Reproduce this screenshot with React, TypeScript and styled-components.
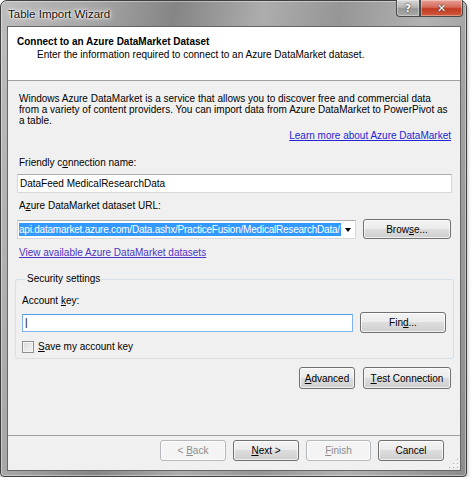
import styled, { createGlobalStyle } from 'styled-components';

const GlobalStyle = createGlobalStyle`
  html, body {
    margin: 0;
    padding: 0;
    background: #ffffff;
  }
  body {
    font-family: "Liberation Sans", Arial, sans-serif;
    font-size: 10px;
    color: #000;
  }
`;

const Window = styled.div`
  width: 467px;
  height: 477px;
  box-sizing: border-box;
  display: flex;
  flex-direction: column;
  border: 1px solid #3f3f3f;
  border-radius: 7px 7px 4px 4px;
  background: linear-gradient(
    100deg,
    #bdbdbd 0%,
    #a4a4a4 18%,
    #858585 32%,
    #adadad 48%,
    #969696 62%,
    #b2b2b2 78%,
    #8c8c8c 100%
  );
  box-shadow: inset 0 0 0 1px rgba(255, 255, 255, 0.4), 0 2px 4px rgba(0, 0, 0, 0.35);
`;

const TitleBar = styled.div`
  height: 25px;
  display: flex;
  align-items: flex-start;
  padding-left: 7px;
`;

const Title = styled.div`
  font-size: 11.5px;
  line-height: 12px;
  margin-top: 7px;
  color: #111;
  text-shadow: 0 0 6px #fff, 0 0 3px #fff, 0 0 2px #fff;
  flex: 1;
`;

const CaptionButton = styled.div<{ $close?: boolean; $w: number }>`
  width: ${(p) => p.$w}px;
  height: 17px;
  box-sizing: border-box;
  margin-top: -1px;
  border: 1px solid #4a4a4a;
  border-top: none;
  border-radius: ${(p) => (p.$close ? '0 0 4px 0' : '0 0 0 4px')};
  display: flex;
  align-items: center;
  justify-content: center;
  font-family: "DejaVu Sans", sans-serif;
  font-weight: bold;
  font-size: 11px;
  color: #fff;
  text-shadow: 0 0 1px #333, 0 0 2px #444;
  background: ${(p) =>
    p.$close
      ? 'linear-gradient(180deg, #e8a195 0%, #d46a57 45%, #c23b22 55%, #d05a3c 100%)'
      : 'linear-gradient(180deg, #d8d8d8 0%, #b5b5b5 45%, #979797 55%, #a9a9a9 100%)'};
  box-shadow: inset 0 0 0 1px rgba(255, 255, 255, 0.35);
`;

const CaptionGroup = styled.div`
  display: flex;
  margin-right: 3px;
`;

const Client = styled.div`
  flex: 1;
  margin: 0 5px 5px 6px;
  border: 1px solid #666666;
  background: #f0f0f0;
  display: flex;
  flex-direction: column;
`;

const Header = styled.div`
  height: 54px;
  box-sizing: border-box;
  background: #ffffff;
  border-bottom: 1px solid #a0a0a0;
  padding: 8px 0 0 9px;
  line-height: 13px;
`;

const HeaderTitle = styled.div`
  font-weight: bold;
  font-size: 10px;
`;

const HeaderSub = styled.div`
  padding-left: 20px;
  font-size: 10px;
`;

const Body = styled.div`
  flex: 1;
  display: flex;
  flex-direction: column;
  padding: 12px 8px 0 9px;
`;

const Paragraph = styled.div`
  line-height: 11px;
  margin-left: 2px;
  width: 432px;
`;

const Link = styled.a<{ $visited?: boolean }>`
  color: ${(p) => (p.$visited ? '#4f33c9' : '#2424d8')};
  text-decoration: underline;
  line-height: 12px;
  cursor: pointer;
`;

const RightLink = styled(Link)`
  align-self: flex-end;
  margin: 4px 1px 0 0;
`;

const LeftLink = styled(Link)`
  align-self: flex-start;
  margin: 8px 0 0 2px;
`;

const Label = styled.div<{ $mt: number }>`
  line-height: 12px;
  margin: ${(p) => p.$mt}px 0 0 2px;
`;

const TextBox = styled.div<{ $focused?: boolean; $h: number }>`
  height: ${(p) => p.$h}px;
  box-sizing: border-box;
  background: #fff;
  border: 1px solid ${(p) => (p.$focused ? '#7eb4ea' : '#d5d8de')};
  border-top-color: ${(p) => (p.$focused ? '#569de5' : '#abadb3')};
  display: flex;
  align-items: center;
  padding-left: 2px;
  line-height: 12px;
`;

const NameBox = styled(TextBox)`
  margin-top: 5px;
`;

const Row = styled.div<{ $mt: number }>`
  display: flex;
  align-items: center;
  gap: 7px;
  margin-top: ${(p) => p.$mt}px;
`;

const Combo = styled(TextBox)`
  flex: 1;
  padding-left: 1px;
`;

const ComboText = styled.div`
  width: 322px;
  height: 13px;
  white-space: nowrap;
  background: #3399ff;
  color: #fff;
  line-height: 13px;
  letter-spacing: -0.22px;
`;

const ComboArrow = styled.div`
  flex: 1;
  display: flex;
  justify-content: center;
  padding-top: 1px;
  &::after {
    content: '';
    border-left: 3.5px solid transparent;
    border-right: 3.5px solid transparent;
    border-top: 4px solid #000;
  }
`;

const Button = styled.div<{ $w: number; $h: number; $disabled?: boolean }>`
  width: ${(p) => p.$w}px;
  height: ${(p) => p.$h}px;
  box-sizing: border-box;
  border: 1px solid ${(p) => (p.$disabled ? '#b5b8ba' : '#707070')};
  border-radius: 3px;
  display: flex;
  align-items: center;
  justify-content: center;
  color: ${(p) => (p.$disabled ? '#8d8d8d' : '#000')};
  background: ${(p) =>
    p.$disabled
      ? '#f4f4f4'
      : 'linear-gradient(180deg, #f3f3f3 0%, #ebebeb 49%, #dddddd 50%, #cfcfcf 100%)'};
  box-shadow: inset 0 0 0 1px rgba(255, 255, 255, 0.7);
  flex-shrink: 0;
`;

const GroupBox = styled.fieldset`
  margin: 14px -2px 0 -2px;
  padding: 0 7px 5px 6px;
  border: 1px solid #d5dfe5;
  border-radius: 3px;
  display: flex;
  flex-direction: column;
  min-width: 0;
`;

const Legend = styled.legend`
  padding: 0 1px;
  margin-left: 4px;
  line-height: 12px;
`;

const CheckRow = styled.div`
  display: flex;
  align-items: center;
  gap: 4px;
  margin-top: 8px;
  line-height: 12px;
`;

const CheckBox = styled.div`
  width: 12px;
  height: 12px;
  box-sizing: border-box;
  border: 1px solid #8e8f8f;
  background: linear-gradient(135deg, #dcdcdc 0%, #f4f4f4 100%);
  box-shadow: inset 0 0 0 1px #f6f6f6;
`;

const ActionRow = styled.div`
  display: flex;
  justify-content: flex-end;
  gap: 8px;
  margin: 8px 1px 0 0;
`;

const Footer = styled.div`
  position: relative;
  height: 35px;
  box-sizing: border-box;
  border-top: 1px solid #a0a0a0;
  display: flex;
  justify-content: flex-end;
  gap: 7px;
  padding: 4px 16px 0 0;
`;

const Grip = styled.svg`
  position: absolute;
  right: 1px;
  bottom: 1px;
`;

function ResizeGrip() {
  const dots = [
    [9, 1],
    [9, 5],
    [5, 5],
    [9, 9],
    [5, 9],
    [1, 9],
  ];
  return (
    <Grip width="11" height="11" viewBox="0 0 11 11">
      {dots.map(([x, y]) => (
        <g key={`${x}-${y}`}>
          <rect x={x + 1} y={y + 1} width="1" height="1" fill="#fff" />
          <rect x={x} y={y} width="1" height="1" fill="#a8a8a8" />
        </g>
      ))}
    </Grip>
  );
}

export default function App() {
  return (
    <>
      <GlobalStyle />
      <Window>
        <TitleBar>
          <Title>Table Import Wizard</Title>
          <CaptionGroup>
            <CaptionButton $w={24}>?</CaptionButton>
            <CaptionButton $w={43} $close>
              ✕
            </CaptionButton>
          </CaptionGroup>
        </TitleBar>
        <Client>
          <Header>
            <HeaderTitle>Connect to an Azure DataMarket Dataset</HeaderTitle>
            <HeaderSub>
              Enter the information required to connect to an Azure DataMarket dataset.
            </HeaderSub>
          </Header>
          <Body>
            <Paragraph>
              Windows Azure DataMarket is a service that allows you to discover free and
              commercial data from a variety of content providers. You can import data from
              Azure DataMarket to PowerPivot as a table.
            </Paragraph>
            <RightLink>Learn more about Azure DataMarket</RightLink>
            <Label $mt={15}>
              Friendly c<u>o</u>nnection name:
            </Label>
            <NameBox $h={19}>DataFeed MedicalResearchData</NameBox>
            <Label $mt={7}>
              A<u>z</u>ure DataMarket dataset URL:
            </Label>
            <Row $mt={7} style={{ marginRight: 1 }}>
              <Combo $h={19}>
                <ComboText>
                  api.datamarket.azure.com/Data.ashx/PracticeFusion/MedicalResearchData/
                </ComboText>
                <ComboArrow />
              </Combo>
              <Button $w={88} $h={20}>
                Brow<u>s</u>e...
              </Button>
            </Row>
            <LeftLink $visited>View available Azure DataMarket datasets</LeftLink>
            <GroupBox>
              <Legend>Security settings</Legend>
              <Label $mt={10} style={{ marginLeft: 0 }}>
                Account <u>k</u>ey:
              </Label>
              <Row $mt={5}>
                <TextBox $h={18} $focused style={{ flex: 1 }}>
                  |
                </TextBox>
                <Button $w={86} $h={21}>
                  Fin<u>d</u>...
                </Button>
              </Row>
              <CheckRow>
                <CheckBox />
                <span>
                  <u>S</u>ave my account key
                </span>
              </CheckRow>
            </GroupBox>
            <ActionRow>
              <Button $w={56} $h={22}>
                <u>A</u>dvanced
              </Button>
              <Button $w={88} $h={22}>
                <u>T</u>est Connection
              </Button>
            </ActionRow>
          </Body>
          <Footer>
            <Button $w={66} $h={21} $disabled>
              &lt;&nbsp;<u>B</u>ack
            </Button>
            <Button $w={66} $h={21}>
              <u>N</u>ext &gt;
            </Button>
            <Button $w={65} $h={21} $disabled>
              <u>F</u>inish
            </Button>
            <Button $w={66} $h={21}>
              Cancel
            </Button>
            <ResizeGrip />
          </Footer>
        </Client>
      </Window>
    </>
  );
}
